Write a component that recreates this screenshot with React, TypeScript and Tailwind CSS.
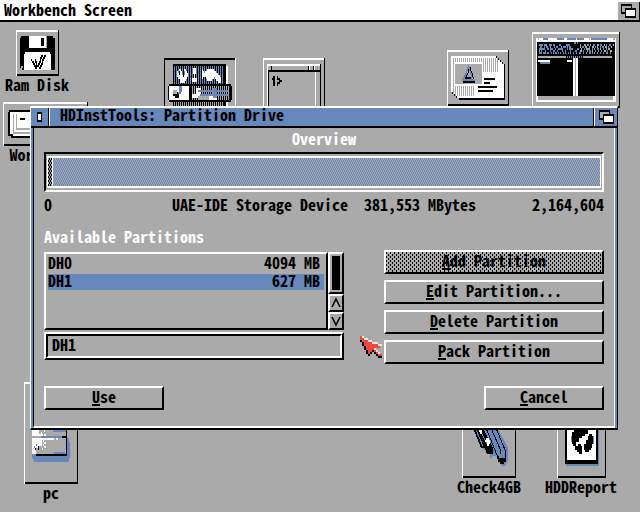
import { useState, type ReactNode } from "react";
import clsx from "clsx";

const COLORS: Record<string, string> = {
  k: "#000000",
  w: "#ffffff",
  b: "#6688bb",
  g: "#aaaaaa",
  r: "#ee4444",
  c: "#eeeecc",
};

const POINTER = [
  "rc.........",
  "rrcc.......",
  "krrrcc.....",
  ".krrrrccc..",
  ".krrrrrrrcc",
  "..krrrrrrr.",
  "..krrrrc...",
  "...krrkrc..",
  "...krk.krc.",
  "....k...krr",
  ".........kk",
];

const CHECK_MARK = [
  "..........kk.kk",
  ".........kk.kk.",
  "k...k....k.kk..",
  ".kk.kk..kk.k...",
  "..kk.k.kk.kk...",
  "...kkkkk.kk....",
  "....kk..kk.....",
];

const WRENCH = [
  "..ww...ww..",
  "w..ww...ww.",
  "ww.ww...www",
  "wwwwww.wwww",
  ".wwwwwwwww.",
  "...wwwwww..",
  "...wwwww...",
];

const HAMMER = [
  "w....wwwwwww.........",
  "ww.wwwwwwwwwww.......",
  "wwwwwwwwwwwwwwww.....",
  "wwwwwwwwwwwwwwwwww...",
  "w...wwwwwwww.wwwwww..",
  ".....wwwww....wwwww..",
  "................www..",
];

const PROMPT = [
  ".kk..k.....",
  "kkk..kkk...",
  ".kk....kkk.",
  ".kk..kkk...",
  ".kk..k.....",
];

const TRIANGLE = [
  ".......b.......",
  "......bbbk.....",
  ".....bbkbk.....",
  ".....b.k.bk....",
  "....bbk..bbk...",
  "...bbk....bk...",
  "..bbkkkkkkbbk..",
  ".bbbbbbbbbbbbb.",
  "..kkkkkkkkkkkk.",
];

// each cell is pw x ph screen pixels, like the 1:2 pixels of a hires screen
function Pixels({ rows, x = 0, y = 0, pw = 1, ph = 2 }: { rows: string[]; x?: number; y?: number; pw?: number; ph?: number }) {
  return (
    <g>
      {rows.map((row, j) =>
        row.split("").map((c, i) =>
          COLORS[c] ? <rect key={`${i}-${j}`} x={x + i * pw} y={y + j * ph} width={pw} height={ph} fill={COLORS[c]} /> : null
        )
      )}
    </g>
  );
}

function Stripes({ x, y, count, height, fill }: { x: number; y: number; count: number; height: number; fill: string }) {
  return (
    <g fill={fill}>
      {Array.from({ length: count }, (_, i) => (
        <rect key={i} x={x + i * 2} y={y} width={1} height={height} />
      ))}
    </g>
  );
}

function Art({ w, h, children, inset = false }: { w: number; h: number; children: ReactNode; inset?: boolean }) {
  const light = inset ? "#000" : "#fff";
  const dark = inset ? "#fff" : "#000";
  return (
    <svg width={w} height={h} viewBox={`0 0 ${w} ${h}`} shapeRendering="crispEdges" className="block shrink-0" aria-hidden="true">
      <rect width={w} height={h} fill="#aaa" />
      {children}
      <rect x={w - 1} y={0} width={1} height={h} fill={dark} />
      <rect x={1} y={h - 2} width={w - 1} height={2} fill={dark} />
      <rect width={w - 1} height={2} fill={light} />
      <rect width={1} height={h} fill={light} />
    </svg>
  );
}

function DesktopIcon({ place, label, children }: { place: string; label?: string; children: ReactNode }) {
  return (
    <figure className={clsx("absolute flex flex-col items-center gap-0.5", place)}>
      {children}
      {label && <figcaption className="whitespace-pre">{label}</figcaption>}
    </figure>
  );
}

function RamDisk() {
  return (
    <Art w={43} h={46}>
      <path d="M5 6H37V8H39V40H6V38H4V8H5Z" fill="#000" />
      <path d="M13 6H31V18H13Z" fill="#fff" />
      <path d="M30 6H31V18H30Z" fill="#aaa" />
      <path d="M25 8H28V16H25Z" fill="#000" />
      <path d="M9 22H34V24H35V40H8V24H9Z" fill="#fff" />
      <path d="M5 36H7V38H5Z" fill="#aaa" />
      <Pixels rows={CHECK_MARK} x={15} y={25} />
    </Art>
  );
}

function WorkDisk() {
  return (
    <Art w={85} h={44}>
      <path d="M6 8H80V36H8V34H5V10H6Z" fill="#000" />
      <path d="M7 10H80V34H10V32H7Z" fill="#fff" />
      <path d="M9 12H10V32H80V30H11V12ZM12 12H13V28H80V26H14V12Z" fill="#aaa" />
      <path d="M16 10H80V26H16Z" fill="#fff" />
      <path d="M17 16H22V18H17Z" fill="#000" />
    </Art>
  );
}

function ToolBox() {
  return (
    <Art w={72} h={56} inset>
      <rect x={9} y={6} width={53} height={50} fill="#000" />
      <Stripes x={10} y={8} count={25} height={18} fill="#68b" />
      <Stripes x={10} y={44} count={25} height={12} fill="#aaa" />
      <rect x={62} y={8} width={2} height={48} fill="#fff" />
      <Pixels rows={WRENCH} x={13} y={11} />
      <path d="M29 10H32V16H31V20H33V24H28V20H30V16H29Z" fill="#fff" />
      <Pixels rows={HAMMER} x={38} y={11} />
      <path d="M5 26H67V28H68V42H67V44H5V42H4V28H5Z" fill="#000" />
      <rect x={5} y={28} width={20} height={14} fill="#fff" />
      <path d="M9 34H15V40H11V38H9Z" fill="#000" />
      <path d="M9 32H13V36H9Z" fill="#aaa" />
      <path d="M15 28H18V34H17V36H14V34H15Z" fill="#68b" />
      <Stripes x={28} y={28} count={19} height={14} fill="#aaa" />
      <path d="M32 30H37V38H53V42H34V40H28V36H32Z" fill="#fff" />
      <path d="M34 38H45V42H34Z" fill="#aaa" />
      <path d="M34 32H64V34H34ZM36 36H64V38H36ZM49 30H53V40H49Z" fill="#68b" />
    </Art>
  );
}

function Shell() {
  return (
    <Art w={62} h={56}>
      <path d="M4 6H58V8H5V56H4Z" fill="#fff" />
      <path d="M57 6H58V56H57Z" fill="#000" />
      <path d="M5 12H58V14H5ZM5 14H6V56H5Z" fill="#000" />
      <path d="M8 8H9V12H8ZM45 8H46V12H45ZM50 8H51V12H50Z" fill="#000" />
      <path d="M46 8H47V12H46ZM51 8H52V12H51ZM52 14H53V56H52Z" fill="#fff" />
      <Pixels rows={PROMPT} x={9} y={18} />
    </Art>
  );
}

function Card() {
  return (
    <Art w={62} h={56}>
      <path d="M5 6H50V8H52V10H54V12H56V14H58V50H12V48H9V46H7V44H5V42H4V6Z" fill="#000" />
      <path d="M4 6H49V8H51V10H53V12H55V14H57V48H10V46H8V44H6V42H4Z" fill="#fff" />
      <Stripes x={6} y={8} count={23} height={38} fill="#aaa" />
      <path d="M36 22H55V36H36ZM27 34H55V46H27Z" fill="#fff" />
      <path d="M7 12H36V36H7Z" fill="#fff" />
      <rect x={8} y={14} width={27} height={20} fill="#aaa" />
      <Pixels rows={TRIANGLE} x={14} y={15} />
      <path d="M37 28H48V30H37ZM37 32H43V34H37ZM31 36H50V38H31ZM31 40H46V42H31Z" fill="#000" />
    </Art>
  );
}

function Monitor() {
  const noise = [
    "...................................bb.b....................................",
    "bbbb.bbb..bbb.bb....bb.....bbbb..........g...gg.bb.g..bb..gg.bb..g.b..bb..g",
    ".bb..b.bb..b...b.bb...b.bbb.b.bb.........g.bb.gg..b..gg.b.g..b.bb.gg.b..g..",
    "bbbbbb..bb.bbb..b..bbbbb....b.bbbb....bb..g..b.gggb..b.g..bb.g..b..b.gg....",
    "b.b...b....b..bb..b....b..b....b....bb...gg.b...g.bb.g..b..b..g..gg.b..gg..",
    "bbb.bbb.bb..b.b.bb.b.b..b.b..b.b..b..b..bb..b..b..bb.b.b..b..b..b..bb..b...",
  ];
  return (
    <Art w={88} h={76}>
      <rect x={4} y={6} width={80} height={64} fill="#fff" />
      <path d="M11 6H16V8H11ZM25 6H32V8H25ZM35 6H44V8H35ZM45 6H52V8H45ZM59 6H75V8H59Z" fill="#68b" />
      <path d="M6 6H7V8H6ZM57 6H58V8H57ZM81 6H83V8H81Z" fill="#aaa" />
      <rect x={5} y={10} width={78} height={54} fill="#000" />
      <Pixels rows={noise} x={7} y={10} />
      <rect x={6} y={24} width={74} height={2} fill="#aaa" />
      <rect x={34} y={24} width={17} height={2} fill="#000" />
      <Stripes x={35} y={24} count={8} height={2} fill="#68b" />
      <path d="M6 28H18V30H6ZM35 28H40V30H35ZM41 26H46V64H41Z" fill="#fff" />
      <path d="M8 30H18V32H8Z" fill="#68b" />
      <rect x={43} y={26} width={1} height={38} fill="#aaa" />
      <path d="M6 64H81V68H6Z" fill="#aaa" />
    </Art>
  );
}

function Computer() {
  return (
    <Art w={54} h={102}>
      <path d="M8 48H43V56H45V60H46V76H45V80H10V78H9V76H8Z" fill="#68b" />
      <rect x={8} y={48} width={34} height={24} fill="#aaa" />
      <path d="M8 48H15V52H19V54H8ZM8 56H30V58H8ZM8 58H18V64H15V66H12V72H8Z" fill="#fff" />
      <path d="M17 50H18V52H17ZM20 48H21V50H20ZM20 52H22V54H20ZM19 58H20V60H19ZM20 60H22V62H20ZM19 62H20V64H19ZM20 64H22V66H20ZM18 66H19V68H18ZM32 56H34V58H32Z" fill="#fff" />
      <path d="M29 48H42V50H29ZM17 54H38V56H17ZM30 70H41V72H30ZM10 64H11V66H10ZM12 62H13V64H12Z" fill="#68b" />
      <path d="M42 48H43V74H12V72H42ZM38 54H42V56H38ZM11 66H12V68H11ZM14 64H15V68H14Z" fill="#000" />
    </Art>
  );
}

function Knife() {
  return (
    <Art w={54} h={60}>
      <path d="M11 10H36L41 20L46 30V42L43 48H40L34 38H30V40H28V36L20 30Z" fill="#68b" />
      <path d="M11 10H21L31 30V36H25L23 30L19 30Z" fill="#000" />
      <path d="M14 12L21 28M18 12L25 26" fill="none" stroke="#68b" strokeWidth="1" />
      <path d="M17 12H20V16H18ZM24 20H27V22H28V26H27V28H25V24H23Z" fill="#fff" />
      <path d="M24 10L37 42M29 10L39 33L38 36M34 10L43 32V40" fill="none" stroke="#000" strokeWidth="1" />
      <path d="M35 38H37V40H44V44H42V46H38V44H36Z" fill="#000" />
    </Art>
  );
}

function Report() {
  return (
    <Art w={49} h={60}>
      <rect x={9} y={6} width={33} height={42} fill="#68b" />
      <rect x={8} y={4} width={33} height={42} fill="#000" />
      <rect x={10} y={4} width={29} height={38} fill="#fff" />
      <path d="M17 8H33V12H31V16H28V18H25V20H22V24H19V28H16V26H15V14H17Z" fill="#000" />
      <path d="M32 16H35V18H36V26H35V30H34V32H32V34H28V32H27V26H29V22H31V18H32Z" fill="#000" />
      <path d="M21 26H24V28H25V36H22V34H20V32H18V28H21Z" fill="#000" />
      <path d="M36 18H37V26H36ZM14 18H15V24H14Z" fill="#68b" />
    </Art>
  );
}

function DepthIcon() {
  return (
    <svg width="15" height="14" viewBox="0 0 15 14" shapeRendering="crispEdges" className="block" aria-hidden="true">
      <rect width="11" height="10" fill="#000" />
      <rect x="1" y="2" width="9" height="6" fill="#aaa" />
      <rect x="4" y="4" width="11" height="10" fill="#000" />
      <rect x="5" y="6" width="9" height="6" fill="#fff" />
    </svg>
  );
}

function Gadget({ label, hotkey, ghosted = false, className }: { label: string; hotkey: string; ghosted?: boolean; className: string }) {
  return (
    <button
      type="button"
      disabled={ghosted}
      className={clsx(
        "relative h-6 border-2 border-t-white border-l-white border-b-black border-r-black pb-1 text-center leading-4 whitespace-pre",
        className
      )}
    >
      <span className="underline decoration-2 underline-offset-1">{hotkey}</span>
      {label}
      {ghosted && (
        <svg className="absolute inset-0 h-full w-full" shapeRendering="crispEdges" aria-hidden="true">
          <pattern id="ghost" width="4" height="4" patternUnits="userSpaceOnUse">
            <rect width="1" height="2" fill="#000" />
            <rect x="2" y="2" width="1" height="2" fill="#000" />
          </pattern>
          <rect width="100%" height="100%" fill="url(#ghost)" />
        </svg>
      )}
    </button>
  );
}

const partitions = [
  { name: "DH0", size: "4094 MB" },
  { name: "DH1", size: " 627 MB" },
];

function PartitionDrive() {
  const [selected, setSelected] = useState("DH1");

  return (
    <section className="absolute top-[106px] right-[22px] left-[30px] border-t-2 border-r border-b-2 border-l border-t-white border-r-black border-b-black border-l-white bg-[#6688bb]">
      <header className="flex h-5 items-stretch border-b-2 border-black">
        <button type="button" aria-label="Close" className="flex w-[18px] items-center justify-center border-r border-black">
          <span className="h-2.5 w-[5px] border-x border-y-2 border-black bg-white" />
        </button>
        <h1 className="flex-1 border-l border-white pl-2.5">HDInstTools: Partition Drive</h1>
        <button type="button" aria-label="Depth" className="flex w-6 items-stretch border-l border-black">
          <span className="flex flex-1 items-start justify-center border-l border-white pt-0.5">
            <DepthIcon />
          </span>
        </button>
      </header>

      <div className="mx-0.5 border-r border-b-2 border-l border-r-white border-b-white border-l-black bg-[#aaaaaa] px-2.5 pt-1 pb-4">
        <h2 className="pb-1 text-center text-white">Overview</h2>
        <div className="mt-1 h-10 border-2 border-t-black border-r-white border-b-white border-l-black px-px py-0.5">
          <div className="flex h-full border-x border-y-2 border-white">
            <span className="w-1 bg-[repeating-conic-gradient(#000_0_25%,#aaa_0_50%)] bg-[length:2px_4px]" />
            <span className="flex-1 border-l border-white bg-[repeating-conic-gradient(#6688bb_0_25%,#aaa_0_50%)] bg-[length:2px_4px]" />
          </div>
        </div>
        <div className="mt-1.5 flex justify-between pb-1">
          <span className="w-20">0</span>
          <span className="whitespace-pre">UAE-IDE Storage Device  381,553 MBytes</span>
          <span className="w-20 text-right">2,164,604</span>
        </div>

        <div className="mt-4 flex justify-between">
          <div className="w-[300px]">
            <label htmlFor="partition" className="block pb-1 text-white">
              Available Partitions
            </label>
            <div className="mt-1.5 flex h-[78px]">
              <ul className="flex flex-1 flex-col gap-0.5 border-2 border-t-white border-r-black border-b-black border-l-white p-0.5">
                {partitions.map((p) => (
                  <li key={p.name}>
                    <button
                      type="button"
                      onClick={() => setSelected(p.name)}
                      className={clsx("flex h-4 w-full items-start justify-between pr-1 whitespace-pre", selected === p.name && "bg-[#6688bb]")}
                    >
                      <span>{p.name}</span>
                      <span>{p.size}</span>
                    </button>
                  </li>
                ))}
              </ul>
              <div className="flex w-4 flex-col">
                <div className="flex-1 border-2 border-t-white border-r-black border-b-black border-l-white p-0.5">
                  <div className="h-full bg-black" />
                </div>
                {["M2 11L6 3L10 11", "M2 3L6 11L10 3"].map((d, i) => (
                  <button
                    key={d}
                    type="button"
                    aria-label={i ? "Scroll down" : "Scroll up"}
                    className="h-[18px] border-2 border-t-white border-r-black border-b-black border-l-white"
                  >
                    <svg width="12" height="14" viewBox="0 0 12 14" className="block" fill="none" stroke="#000" strokeWidth="1.5">
                      <path d={d} />
                    </svg>
                  </button>
                ))}
              </div>
            </div>
            <div className="mt-0.5 h-7 border-2 border-t-white border-r-black border-b-black border-l-white">
              <input
                id="partition"
                value={selected}
                onChange={(e) => setSelected(e.target.value)}
                className="block h-full w-full border-2 border-t-black border-r-white border-b-white border-l-black px-1 pb-1 leading-4 outline-none"
              />
            </div>
          </div>

          <div className="mt-5 flex w-[220px] flex-col gap-1.5">
            <Gadget hotkey="A" label="dd Partition" ghosted className="w-full" />
            <Gadget hotkey="E" label="dit Partition..." className="w-full" />
            <Gadget hotkey="D" label="elete Partition" className="w-full" />
            <Gadget hotkey="P" label="ack Partition" className="w-full" />
          </div>
        </div>

        <div className="mt-[22px] flex justify-between">
          <Gadget hotkey="U" label="se" className="w-[120px]" />
          <Gadget hotkey="C" label="ancel" className="w-[120px]" />
        </div>
      </div>
    </section>
  );
}

export default function App() {
  return (
    <div className="relative flex min-h-screen flex-col overflow-hidden bg-[#aaaaaa] font-['Noto_Sans_Mono_CJK_JP','Noto_Sans_CJK_JP','Liberation_Mono',monospace] text-[16px] leading-3 font-bold text-black">
      <header className="flex h-[22px] items-stretch justify-between border-b-2 border-black bg-white pl-1">
        <span className="leading-[18px]">Workbench Screen</span>
        <button type="button" aria-label="Screen depth" className="mt-0.5 flex w-[22px] items-start justify-center border-r border-black bg-[#aaaaaa] pt-0.5">
          <DepthIcon />
        </button>
      </header>

      <main className="flex-1">
        <DesktopIcon place="left-[5px] top-[30px]" label="Ram Disk">
          <RamDisk />
        </DesktopIcon>
        <DesktopIcon place="left-[3px] top-[102px]" label="Workbench">
          <WorkDisk />
        </DesktopIcon>
        <DesktopIcon place="left-[164px] top-[58px]">
          <ToolBox />
        </DesktopIcon>
        <DesktopIcon place="left-[263px] top-[58px]">
          <Shell />
        </DesktopIcon>
        <DesktopIcon place="left-[447px] top-[50px]">
          <Card />
        </DesktopIcon>
        <DesktopIcon place="left-[532px] top-[32px]">
          <Monitor />
        </DesktopIcon>
        <DesktopIcon place="left-[24px] top-[382px]" label="pc">
          <Computer />
        </DesktopIcon>
        <DesktopIcon place="left-[457px] top-[418px]" label="Check4GB">
          <Knife />
        </DesktopIcon>
        <DesktopIcon place="left-[545px] top-[418px]" label="HDDReport">
          <Report />
        </DesktopIcon>

        <PartitionDrive />

        <svg width="22" height="22" viewBox="0 0 22 22" shapeRendering="crispEdges" className="pointer-events-none absolute top-[336px] left-[360px]" aria-hidden="true">
          <Pixels rows={POINTER} pw={2} />
        </svg>
      </main>
    </div>
  );
}
